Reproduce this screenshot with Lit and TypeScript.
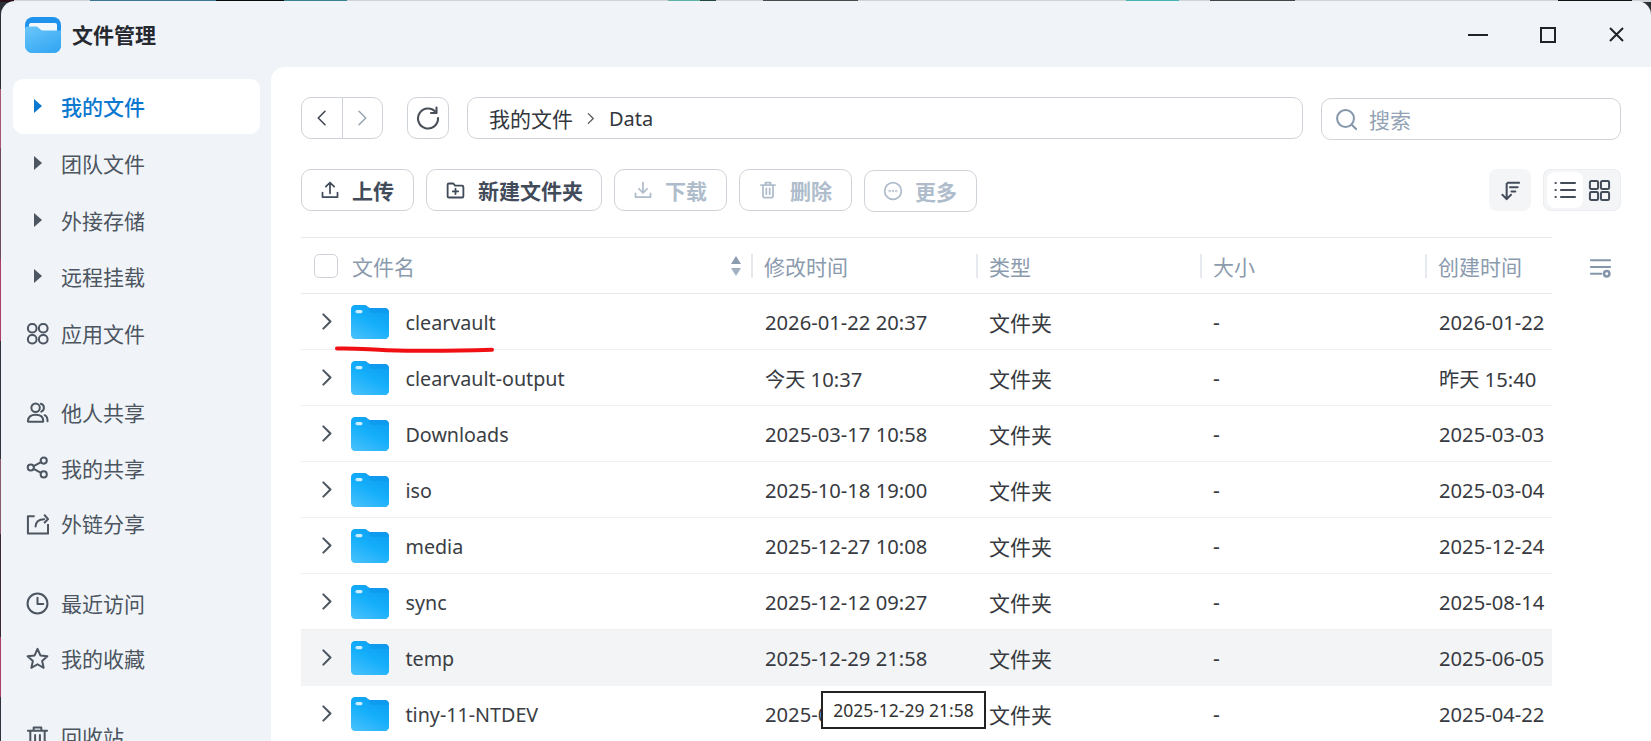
import { LitElement, html, css, svg } from "lit";
import { customElement } from "lit/decorators.js";

const ic = (w: number, body: unknown, cls = "") =>
  html`<svg class=${cls} width=${w} height=${w} viewBox="0 0 24 24" fill="none" stroke="currentColor" stroke-width="2.1" stroke-linecap="round" stroke-linejoin="round">${body}</svg>`;

const icons: Record<string, unknown> = {
  apps: svg`<rect x="2" y="2" width="9" height="9" rx="4.2"/><rect x="13.5" y="2" width="9" height="9" rx="4.2"/><rect x="2" y="13.5" width="9" height="9" rx="4.2"/><rect x="13.5" y="13.5" width="9" height="9" rx="4.2"/>`,
  people: svg`<circle cx="10" cy="7" r="4.4"/><path d="M2 21c0-4.500 3.200-6.600 8-6.600s8 2.100 8 6.600c0 .4-.2.6-.6.6H2.600c-.4 0-.6-.2-.6-.6z"/><path d="M15.500 2.800c2 .6 3.200 2.200 3.200 4.200s-1.200 3.400-2.800 4.100M19.500 14.800c1.900.9 3 2.800 3 6.400"/>`,
  share: svg`<circle cx="18.500" cy="4.800" r="3.200"/><circle cx="18.500" cy="19.200" r="3.200"/><circle cx="5" cy="12" r="3.200"/><path d="M8 10.500l7.700-4.200M8 13.500l7.700 4.200"/>`,
  link: svg`<path d="M9 4.500H2v18h21v-10" stroke-linecap="butt"/><path d="M10 15c0-4.500 3-7.500 9-7.500"/><path d="M19.500 3.400l3.500 4-3.500 3.600"/>`,
  clock: svg`<circle cx="12" cy="12" r="10.400"/><path d="M12 6v6.600h6"/>`,
  star: svg`<path d="M12 2l3 6.800 7.300.8-5.500 4.900 1.600 7.200L12 18l-6.400 3.700 1.600-7.200L1.700 9.600 9 8.800z"/>`,
  trash: svg`<path d="M2 6h20M8 6V2.500h8V6M4.500 6v16h15V6M9.500 10.500v7M14.500 10.500v7"/>`,
  upload: svg`<path d="M12 16V3M7 8l5-5 5 5M3 15v5.500h18V15"/>`,
  newfolder: svg`<path d="M3 5.500c0-1 .6-1.500 1.500-1.500h5l2 2.500h8c1 0 1.500.6 1.500 1.500v10.500c0 1-.6 1.500-1.500 1.500h-15C3.600 20 3 19.500 3 18.500z"/><path d="M12 10v6M9 13h6"/>`,
  download: svg`<path d="M12 3v12M7 10.500l5 5 5-5M3 16v4.500h18V16"/>`,
  del: svg`<path d="M3.500 6h17M9 6V3h6v3M6 6v13.500c0 1 .6 1.500 1.500 1.500h9c.9 0 1.500-.5 1.500-1.500V6M10 10v7M14 10v7"/>`,
  more: svg`<circle cx="12" cy="12" r="10"/><circle cx="8" cy="12" r=".4"/><circle cx="12" cy="12" r=".4"/><circle cx="16" cy="12" r=".4"/>`,
  search: svg`<circle cx="11" cy="11" r="8.800"/><path d="M18 18l4 4"/>`,
  refresh: svg`<path d="M20 6.500A10 10 0 1 0 22 12"/><path d="M20.500 1.500v5.500H15"/>`,
  sort: svg`<path d="M8 5v16M3.500 16.500L8 21l4.500-4.500M9 4h12M11.500 8.500h8M13 13h4"/>`,
  list: svg`<path d="M8 5h14M8 12h14M8 19h14"/><path d="M2.500 5h.3M2.500 12h.3M2.500 19h.3"/>`,
  grid: svg`<rect x="2" y="2" width="8.500" height="8.500" rx="1.500"/><rect x="13.500" y="2" width="8.500" height="8.500" rx="1.500"/><rect x="2" y="13.500" width="8.500" height="8.500" rx="1.500"/><rect x="13.500" y="13.500" width="8.500" height="8.500" rx="1.500"/>`,
  columns: svg`<path d="M2 4.500h20M2 11.500h20M2 18.500h11"/><circle cx="18.500" cy="18.500" r="2.800" stroke-width="2.600"/>`,
  chev: svg`<path d="M8 3l9 9-9 9"/>`,
  back: svg`<path d="M16 3l-9 9 9 9"/>`,
};

let fid = 0;
const folder = () => {
  const id = `f${fid++}`;
  return html`<svg class="folder" width="38" height="34" viewBox="0 0 38 34">
    <defs><linearGradient id=${id} x1="0.15" y1="1" x2="0.7" y2="0"><stop offset="0" stop-color="#45c0fc"/><stop offset="0.55" stop-color="#14aefa"/><stop offset="1" stop-color="#0f9ff2"/></linearGradient></defs>
    <path d="M4 0h9.500c1.300 0 2 .5 3 1.500l2 1.500H34c2.300 0 4 1.700 4 4v23c0 2.300-1.700 4-4 4H4c-2.300 0-4-1.700-4-4V4c0-2.300 1.700-4 4-4z" fill="url(#${id})"/>
    <path d="M18.500 3H34c2.300 0 4 1.700 4 4v1H22c-1.200 0-2-.5-2.700-1.500L16.500 1.500z" fill="#0d93e8" opacity=".45"/>
    <rect x="4.500" y="5" width="7" height="3.200" rx="1.600" fill="#cdeeff"/>
  </svg>`;
};

const rows: [string, string, string, boolean?][] = [
  ["clearvault", "2026-01-22 20:37", "2026-01-22"],
  ["clearvault-output", "今天 10:37", "昨天 15:40"],
  ["Downloads", "2025-03-17 10:58", "2025-03-03"],
  ["iso", "2025-10-18 19:00", "2025-03-04"],
  ["media", "2025-12-27 10:08", "2025-12-24"],
  ["sync", "2025-12-12 09:27", "2025-08-14"],
  ["temp", "2025-12-29 21:58", "2025-06-05", true],
  ["tiny-11-NTDEV", "2025-04-22 18:30", "2025-04-22"],
];

@customElement("app-root")
export class AppRoot extends LitElement {
  static styles = css`
    :host {
      display: block;
      position: relative;
      width: 1651px;
      height: 741px;
      overflow: hidden;
      font-family: "Noto Sans", "Noto Sans CJK SC", sans-serif;
      background: linear-gradient(180deg, #2b2f38 0 12%, #a8566f 12% 20%, #6e4a5c 20% 35%, #a83d6c 35% 46%, #2f3340 46% 62%, #8a5a6a 62% 72%, #3a2a35 72% 86%, #a83d6c 86% 94%, #2f3340 94%);
    }
    .topstrip {
      position: absolute;
      left: 0; right: 0; top: 0; height: 2px;
      background: linear-gradient(90deg, #2a0f18 0 14px, #cfd3d6 14px 90px, #3d7695 90px 216px, #0a0a0a 216px 284px, #3a8296 284px 347px, #cfd3d6 347px 668px, #5fb3a6 668px 700px, #22453e 700px 716px, #cfd3d6 716px 763px, #4a4a4a 763px 858px, #cfd3d6 858px 1126px, #45b7b0 1126px 1179px, #cfd3d6 1179px 1210px, #444 1210px 1295px, #cfd3d6 1295px 1558px, #111 1558px 1632px, #cfd3d6 1632px);
    }
    .window {
      position: absolute;
      left: 1px; top: 1px; right: 0; bottom: 0;
      background: #f0f4f9;
      border-radius: 14px 14px 0 0;
      display: grid;
      grid-template-columns: 270px 1fr;
      grid-template-rows: 66px 1fr;
      overflow: hidden;
    }
    .titlebar { grid-column: 1 / 3; display: flex; align-items: center; padding: 1px 0 0 24px; }
    .logo { display: block; }
    .title { margin: 2px 0 0 11px; font-size: 21px; font-weight: 700; color: #26292f; line-height: 1; }
    .winctl { margin-left: auto; display: flex; align-items: center; color: #1f2226; }
    .winctl span { display: block; }
    .w-min { width: 20px; height: 2px; background: #1f2226; margin-right: 52px; }
    .w-max { width: 16px; height: 16px; border: 2px solid #1f2226; box-sizing: border-box; margin-right: 53px; }
    .winctl svg { margin-right: 27px; display: block; }

    .side { padding: 12px 11px 0 12px; display: flex; flex-direction: column; }
    .group { display: flex; flex-direction: column; }
    .g1 { gap: 1.750px; }
    .g2 { gap: 0.500px; margin-top: 24px; }
    .g3 { gap: 0; margin-top: 25px; }
    .g4 { margin-top: 23px; }
    .item { height: 55px; border-radius: 10px; display: flex; align-items: center; padding: 0 0 1px 13px; box-sizing: border-box; font-size: 21px; flex: none; color: #4c5560; }
    .item.active { background: #fff; color: #0b78d0; font-weight: 500; }
    .item .lead { width: 23px; height: 23px; display: flex; align-items: center; justify-content: center; flex: none; margin-right: 12px; }
    .tri { width: 0; height: 0; border-left: 8px solid currentColor; border-top: 7px solid transparent; border-bottom: 7px solid transparent; }
    .item.tree { padding-left: 9px; }
    .item.tree .lead { justify-content: flex-start; padding-left: 16px; box-sizing: border-box; margin-left: -4px; margin-right: 8px; width: 35px; }

    .main { background: #fff; border-radius: 14px 0 0 0; padding: 30px 30px 0 30px; display: flex; flex-direction: column; min-width: 0; }
    .bar1 { display: flex; height: 42px; align-items: stretch; }
    .btn-bd { border: 1px solid #ced3d9; border-radius: 10px; box-sizing: border-box; background: #fff; display: flex; align-items: center; }
    .nav { width: 82px; flex: none; color: #3f4650; }
    .nav div { flex: 1; height: 100%; display: flex; align-items: center; justify-content: center; }
    .nav div + div { border-left: 1px solid #ced3d9; color: #9aa6b4; }
    .refresh { width: 42px; flex: none; margin-left: 24px; justify-content: center; color: #4a5058; }
    .path { flex: 1; margin-left: 18px; padding-left: 21px; font-size: 20px; color: #33373d; }
    .path .cn { font-size: 21px; }
    .path svg { margin: 0 12px 0 11px; color: #555; stroke-width: 2.4; }
    .searchbox { width: 300px; flex: none; margin-left: 18px; margin-top: 1px; height: 42px; padding-left: 13px; color: #93a3b5; font-size: 21px; }
    .searchbox svg { margin-right: 11px; color: #8496aa; }

    .bar2 { display: flex; align-items: flex-start; margin-top: 30px; height: 42px; }
    .tool { height: 42px; box-sizing: border-box; padding: 0 0 0 18px; font-size: 21px; font-weight: 700; color: #414b5a; flex: none; margin-right: 12.500px; }
    .tool svg { margin-right: 12px; }
    .tool.dis { color: #aebccb; }
    .tool.t1 { width: 112.500px; }
    .tool.t2 { width: 175.500px; }
    .tool.t3 { width: 112.500px; }
    .tool.t5 { margin-top: 1px; }
    .spacer { flex: 1; }
    .sort { width: 42px; height: 42px; background: #f3f5f7; border-radius: 8px; display: flex; align-items: center; justify-content: center; color: #434c59; flex: none; }
    .toggle { width: 78px; height: 42px; margin-left: 12px; background: #f3f5f7; border-radius: 8px; box-shadow: inset 0 0 0 1px #ebedf0; display: flex; align-items: center; padding-left: 4px; box-sizing: border-box; color: #434c59; flex: none; }
    .toggle .on { width: 36px; height: 36px; background: #fff; border-radius: 8px; display: flex; align-items: center; justify-content: center; }
    .toggle .off { margin-left: 5px; display: flex; }

    .tablewrap { position: relative; margin-top: 26px; margin-right: 69px; }
    .cols { position: absolute; right: -60px; top: 19px; color: #8496aa; display: block; }
    .row, .head { display: grid; grid-template-columns: 450px 225px 224px 225px 1fr; align-items: center; }
    .head { height: 57px; border-top: 1px solid #e8ebee; border-bottom: 1px solid #e8ebee; box-sizing: border-box; color: #8b9bae; font-size: 21px; }
    .head > div { display: flex; align-items: center; height: 24px; padding-left: 11px; border-left: 2px solid #e6e9ed; box-sizing: border-box; white-space: nowrap; }
    .head > div:first-child { border-left: 0; padding-left: 13px; position: relative; }
    .check { width: 24px; height: 24px; border: 1px solid #ced3d9; border-radius: 5px; box-sizing: border-box; margin-right: 14px; }
    .sorter { position: absolute; right: 10px; top: 2px; display: flex; flex-direction: column; gap: 4px; }
    .sorter i { display: block; width: 0; height: 0; border-left: 5.500px solid transparent; border-right: 5.500px solid transparent; }
    .sorter i:first-child { border-bottom: 8px solid #8a9cb0; }
    .sorter i:last-child { border-top: 8px solid #a2b1c2; }
    .row { height: 56px; box-sizing: border-box; border-bottom: 1px solid #eef0f2; color: #373a40; font-size: 21px; white-space: nowrap; }
    .row.hover { background: #f2f4f6; border-bottom-color: #f2f4f6; }
    .row > div { padding-left: 13px; overflow: hidden; }
    .row > .name { padding-left: 15.500px; display: flex; align-items: center; color: #3a3e44; font-size: 19.700px; }
    .name span { padding-top: 2px; }
    .row .chev { color: #4b5560; margin-right: 15px; display: block; flex: none; stroke-width: 2.600; }
    .row .folder { margin-right: 17px; flex: none; display: block; }
    .row .date { font-size: 20.200px; padding: 1px 0 0 14px; }

    .ink { position: absolute; left: 330px; top: 340px; pointer-events: none; }
    .tip { position: absolute; left: 821px; top: 691px; width: 165px; height: 38px; box-sizing: border-box; border: 2px solid #222; background: #fff; font-size: 17.500px; color: #333; display: flex; align-items: center; justify-content: center; white-space: nowrap; }
  `;

  private tree(label: string, active = false) {
    return html`<div class="item tree ${active ? "active" : ""}"><span class="lead"><span class="tri"></span></span>${label}</div>`;
  }
  private lead(icon: unknown, label: string) {
    return html`<div class="item"><span class="lead">${ic(23, icon)}</span>${label}</div>`;
  }

  render() {
    return html`
      <div class="topstrip"></div>
      <div class="window">
        <div class="titlebar">
          <svg class="logo" width="36" height="36" viewBox="0 0 36 36">
            <defs>
              <linearGradient id="lg" x1="0" y1="0" x2="0.6" y2="1"><stop offset="0" stop-color="#6cc6f9"/><stop offset="1" stop-color="#37a9f4"/></linearGradient>
            </defs>
            <rect width="36" height="36" rx="8" fill="#1f93ec"/>
            <path d="M4 8c0-1.300 .8-2 2-2h24c1.300 0 2 .7 2 2v8H4z" fill="#f2f7fc"/>
            <path d="M0 12c0-1.600 1-2.500 2.500-2.500h8c1.400 0 2.200.4 3 1.200l2 1.800c.7.6 1.300.9 2.300.9H36V28c0 5-3 8-8 8H8c-5 0-8-3-8-8z" fill="url(#lg)"/>
          </svg>
          <span class="title">文件管理</span>
          <div class="winctl">
            <span class="w-min"></span>
            <span class="w-max"></span>
            <svg width="15" height="15" viewBox="0 0 15 15" stroke="currentColor" stroke-width="2" fill="none"><path d="M1 1l13 13M14 1L1 14"/></svg>
          </div>
        </div>
        <aside class="side">
          <div class="group g1">
            ${this.tree("我的文件", true)}
            ${this.tree("团队文件")}
            ${this.tree("外接存储")}
            ${this.tree("远程挂载")}
            ${this.lead(icons.apps, "应用文件")}
          </div>
          <div class="group g2">
            ${this.lead(icons.people, "他人共享")}
            ${this.lead(icons.share, "我的共享")}
            ${this.lead(icons.link, "外链分享")}
          </div>
          <div class="group g3">
            ${this.lead(icons.clock, "最近访问")}
            ${this.lead(icons.star, "我的收藏")}
          </div>
          <div class="group g4">
            ${this.lead(icons.trash, "回收站")}
          </div>
        </aside>
        <main class="main">
          <div class="bar1">
            <div class="btn-bd nav">
              <div>${ic(18, icons.back)}</div>
              <div>${ic(18, icons.chev)}</div>
            </div>
            <div class="btn-bd refresh">${ic(24, icons.refresh)}</div>
            <div class="btn-bd path"><span class="cn">我的文件</span>${ic(13, icons.chev)}Data</div>
            <div class="btn-bd searchbox">${ic(23, icons.search)}搜索</div>
          </div>
          <div class="bar2">
            <div class="btn-bd tool t1">${ic(20, icons.upload)}上传</div>
            <div class="btn-bd tool t2">${ic(21, icons.newfolder)}新建文件夹</div>
            <div class="btn-bd tool t3 dis">${ic(20, icons.download)}下载</div>
            <div class="btn-bd tool t3 dis">${ic(20, icons.del)}删除</div>
            <div class="btn-bd tool t3 t5 dis">${ic(20, icons.more)}更多</div>
            <div class="spacer"></div>
            <div class="sort">${ic(23, icons.sort)}</div>
            <div class="toggle">
              <div class="on">${ic(24, icons.list)}</div>
              <div class="off">${ic(23, icons.grid)}</div>
            </div>
          </div>
          <div class="tablewrap">
            ${ic(23, icons.columns, "cols")}
            <div class="head">
              <div><span class="check"></span>文件名<span class="sorter"><i></i><i></i></span></div>
              <div>修改时间</div>
              <div>类型</div>
              <div>大小</div>
              <div>创建时间</div>
            </div>
            ${rows.map(
              ([n, m, c, hover]) => html`<div class="row ${hover ? "hover" : ""}">
                <div class="name">${ic(19, icons.chev, "chev")}${folder()}<span>${n}</span></div>
                <div class="date">${m}</div>
                <div>文件夹</div>
                <div>-</div>
                <div class="date">${c}</div>
              </div>`
            )}
          </div>
        </main>
      </div>
      <svg class="ink" width="170" height="20" viewBox="0 0 170 20" fill="none">
        <path d="M7 8.500c20-.5 28 .8 50 1.700 38 1 72 .5 105-.5" stroke="#f00f12" stroke-width="4" stroke-linecap="round"/>
      </svg>
      <div class="tip">2025-12-29 21:58</div>
    `;
  }
}
